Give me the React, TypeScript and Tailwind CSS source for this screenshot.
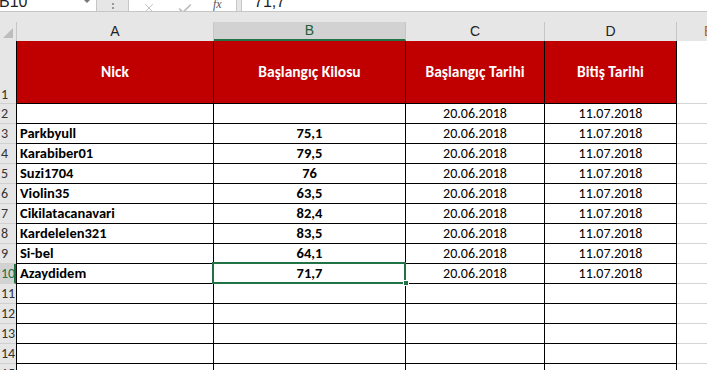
import { Check, X } from "lucide-react"

type Row = { nick: string; kilo: string; start: string; end: string }

const rows: Row[] = [
  { nick: "", kilo: "", start: "20.06.2018", end: "11.07.2018" },
  { nick: "Parkbyull", kilo: "75,1", start: "20.06.2018", end: "11.07.2018" },
  { nick: "Karabiber01", kilo: "79,5", start: "20.06.2018", end: "11.07.2018" },
  { nick: "Suzi1704", kilo: "76", start: "20.06.2018", end: "11.07.2018" },
  { nick: "Violin35", kilo: "63,5", start: "20.06.2018", end: "11.07.2018" },
  { nick: "Cikilatacanavari", kilo: "82,4", start: "20.06.2018", end: "11.07.2018" },
  { nick: "Kardelelen321", kilo: "83,5", start: "20.06.2018", end: "11.07.2018" },
  { nick: "Si-bel", kilo: "64,1", start: "20.06.2018", end: "11.07.2018" },
  { nick: "Azaydidem", kilo: "71,7", start: "20.06.2018", end: "11.07.2018" },
]

const emptyRows = [11, 12, 13, 14, 15]

const font = { fontFamily: "Carlito, Lato, 'Liberation Sans', sans-serif" }

function RowHead({ n, active, tall }: { n: number; active?: boolean; tall?: boolean }) {
  return (
    <div
      className={`w-[16px] shrink-0 flex ${tall ? "items-end pb-[1px]" : "items-center"} pl-[1px] text-[14px] leading-none border-b border-[#d0d0d0] overflow-visible whitespace-nowrap ${
        active ? "bg-[#d2d2d2] text-[#217346] border-r-2 border-r-[#217346]" : "bg-[#e6e6e6] text-[#333]"
      }`}
    >
      {n}
    </div>
  )
}

export default function App() {
  return (
    <div className="w-[707px] h-[370px] overflow-hidden bg-white text-black" style={font}>
      {/* formula bar */}
      <div className="flex h-[12px] bg-[#e6e6e6] border-b border-[#c6c6c6] overflow-hidden">
        <div className="w-[97px] bg-white border-r border-[#c6c6c6] flex items-end justify-between pr-[6px]">
          <span className="text-[16px] leading-none text-[#222] mb-[1px] -ml-[1px]" style={{ fontFamily: "'Liberation Sans', sans-serif" }}>
            B10
          </span>
          <span className="w-0 h-0 border-l-[3px] border-r-[3px] border-t-[3px] border-transparent border-t-[#777] mb-[8px]" />
        </div>
        <div className="w-[31px] flex flex-col items-center justify-end gap-[2px] pb-[2px]">
          <span className="w-[2px] h-[2px] bg-[#999]" />
          <span className="w-[2px] h-[2px] bg-[#999]" />
        </div>
        <div className="w-[109px] bg-white border-x border-[#c6c6c6] flex items-end text-[#bbb] overflow-hidden">
          <X className="w-[14px] h-[14px] ml-[13px] mb-[-4px]" strokeWidth={1.5} />
          <Check className="w-[16px] h-[16px] ml-[21px] mb-[-6px]" strokeWidth={2.5} />
          <span className="ml-[20px] mb-[1px] text-[12px] italic leading-none text-[#555]" style={{ fontFamily: "'Liberation Serif', serif" }}>
            fx
          </span>
        </div>
        <div className="w-[4px]" />
        <div className="flex-1 bg-white border-l border-[#c6c6c6] flex items-end pl-[12px]">
          <span className="text-[16px] leading-none text-[#222] mb-[1px]" style={{ fontFamily: "'Liberation Sans', sans-serif" }}>
            71,7
          </span>
        </div>
      </div>
      <div className="h-[10px] bg-[#e6e6e6]" />

      {/* column headers */}
      <div className="flex h-[19px] bg-[#e6e6e6] text-[14px] text-[#222]" style={{ fontFamily: "'Liberation Sans', sans-serif" }}>
        <div className="w-[16px] shrink-0 relative">
          <span className="absolute right-[3px] bottom-[3px] w-0 h-0" style={{ borderTop: "10px solid transparent", borderRight: "10px solid #bdbdbd" }} />
        </div>
        <div className="w-[198px] shrink-0 flex items-center justify-center border-l border-r border-[#c6c6c6]">A</div>
        <div className="w-[192px] shrink-0 flex items-center justify-center bg-[#d2d2d2] text-[#1e5e3a] border-r border-[#c6c6c6] border-b-2 border-b-[#217346]">
          B
        </div>
        <div className="w-[139px] shrink-0 flex items-center justify-center border-r border-[#c6c6c6]">C</div>
        <div className="w-[132px] shrink-0 flex items-center justify-center border-r border-[#c6c6c6]">D</div>
        <div className="flex-1 flex items-center pl-[27px] text-[#b5651d]">E</div>
      </div>

      {/* row 1 */}
      <div className="flex h-[63px]">
        <RowHead n={1} tall />
        <div className="w-[198px] shrink-0 bg-[#c00000] border-l border-r border-b border-black flex items-center justify-center text-white font-bold text-[15.5px]">
          Nick
        </div>
        <div className="w-[192px] shrink-0 bg-[#c00000] border-r border-b border-black flex items-center justify-center text-white font-bold text-[15.5px]">
          Başlangıç Kilosu
        </div>
        <div className="w-[139px] shrink-0 bg-[#c00000] border-r border-b border-black flex items-center justify-center text-white font-bold text-[15.5px]">
          Başlangıç Tarihi
        </div>
        <div className="w-[132px] shrink-0 bg-[#c00000] border-r border-b border-black flex items-center justify-center text-white font-bold text-[15.5px]">
          Bitiş Tarihi
        </div>
        <div className="flex-1 border-b border-[#d4d4d4]" />
      </div>

      {/* data rows */}
      {rows.map((r, i) => {
        const n = i + 2
        const active = n === 10
        return (
          <div key={n} className="flex h-[20px] text-[14px] leading-none">
            <RowHead n={n} active={active} />
            <div className="w-[198px] shrink-0 border-l border-r border-b border-black flex items-center pl-[3px] font-bold text-[14.5px]">{r.nick}</div>
            <div className="w-[192px] shrink-0 border-r border-b border-black flex items-center justify-center font-bold text-[14.5px] relative">
              {r.kilo}
              {active && (
                <>
                  <span className="absolute -left-[2px] -top-[2px] -right-[1px] -bottom-[1px] border-2 border-[#217346]" />
                  <span className="absolute -right-[4px] -bottom-[3px] w-[6px] h-[6px] bg-[#217346] border border-white" />
                </>
              )}
            </div>
            <div className="w-[139px] shrink-0 border-r border-b border-black flex items-center justify-center">{r.start}</div>
            <div className="w-[132px] shrink-0 border-r border-b border-black flex items-center justify-center">{r.end}</div>
            <div className="flex-1 border-b border-[#d4d4d4]" />
          </div>
        )
      })}

      {emptyRows.map((n) => (
        <div key={n} className="flex h-[20px]">
          <RowHead n={n} />
          <div className="w-[198px] shrink-0 border-l border-r border-b border-black" />
          <div className="w-[192px] shrink-0 border-r border-b border-black" />
          <div className="w-[139px] shrink-0 border-r border-b border-black" />
          <div className="w-[132px] shrink-0 border-r border-b border-black" />
          <div className="flex-1 border-b border-[#d4d4d4]" />
        </div>
      ))}
    </div>
  )
}
